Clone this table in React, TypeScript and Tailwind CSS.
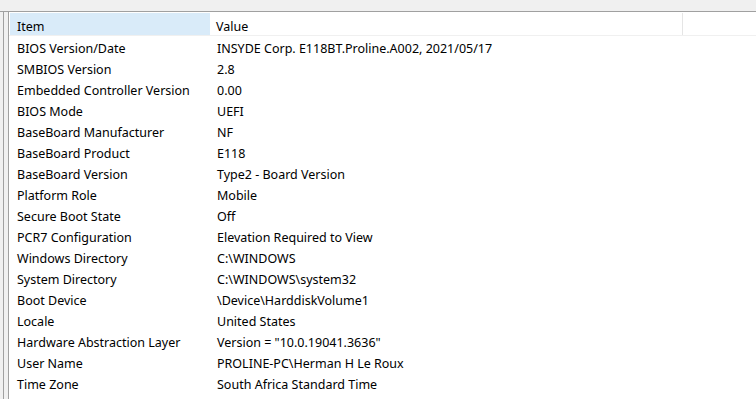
import React from "react";

const rows: [string, string][] = [
  ["BIOS Version/Date", "INSYDE Corp. E118BT.Proline.A002, 2021/05/17"],
  ["SMBIOS Version", "2.8"],
  ["Embedded Controller Version", "0.00"],
  ["BIOS Mode", "UEFI"],
  ["BaseBoard Manufacturer", "NF"],
  ["BaseBoard Product", "E118"],
  ["BaseBoard Version", "Type2 - Board Version"],
  ["Platform Role", "Mobile"],
  ["Secure Boot State", "Off"],
  ["PCR7 Configuration", "Elevation Required to View"],
  ["Windows Directory", "C:\\WINDOWS"],
  ["System Directory", "C:\\WINDOWS\\system32"],
  ["Boot Device", "\\Device\\HarddiskVolume1"],
  ["Locale", "United States"],
  ["Hardware Abstraction Layer", 'Version = "10.0.19041.3636"'],
  ["User Name", "PROLINE-PC\\Herman H Le Roux"],
  ["Time Zone", "South Africa Standard Time"],
];

export default function App() {
  return (
    <div
      className="w-[756px] h-[399px] overflow-hidden bg-white text-[12.5px] text-black flex flex-col"
      style={{ fontFamily: '"Segoe UI", "Noto Sans", sans-serif' }}
    >
      <div className="h-[11px] bg-[#f0f0f0] shrink-0" />
      <div className="flex flex-1 min-h-0">
        {/* splitter edge */}
        <div className="w-[3px] bg-[#f0f0f0] border-t border-[#a0a0a0]" />
        <div className="w-[6px] border-l border-r border-[#a0a0a0] border-t bg-[#f0f0f0]" />
        <div className="flex-1 border-t border-[#a0a0a0] flex flex-col">
          <div className="flex h-[24px] pt-[1px] border-b border-[#f0f0f0] shrink-0">
            <div className="ml-[1px] w-[200px] bg-[#d9ebf9] flex items-center pl-[7px] pt-[7px]">Item</div>
            <div className="w-[473px] flex items-center pl-[6px] pt-[7px] border-r border-[#e5e5e5]">Value</div>
            <div className="flex-1" />
          </div>
          <div className="flex flex-col mt-[3px]">
            {rows.map(([k, v]) => (
              <div key={k} className="flex h-[21px] items-center">
                <div className="ml-[1px] w-[201px] pl-[7px] whitespace-nowrap">{k}</div>
                <div className="pl-[6px] whitespace-nowrap">{v}</div>
              </div>
            ))}
          </div>
        </div>
      </div>
    </div>
  );
}
